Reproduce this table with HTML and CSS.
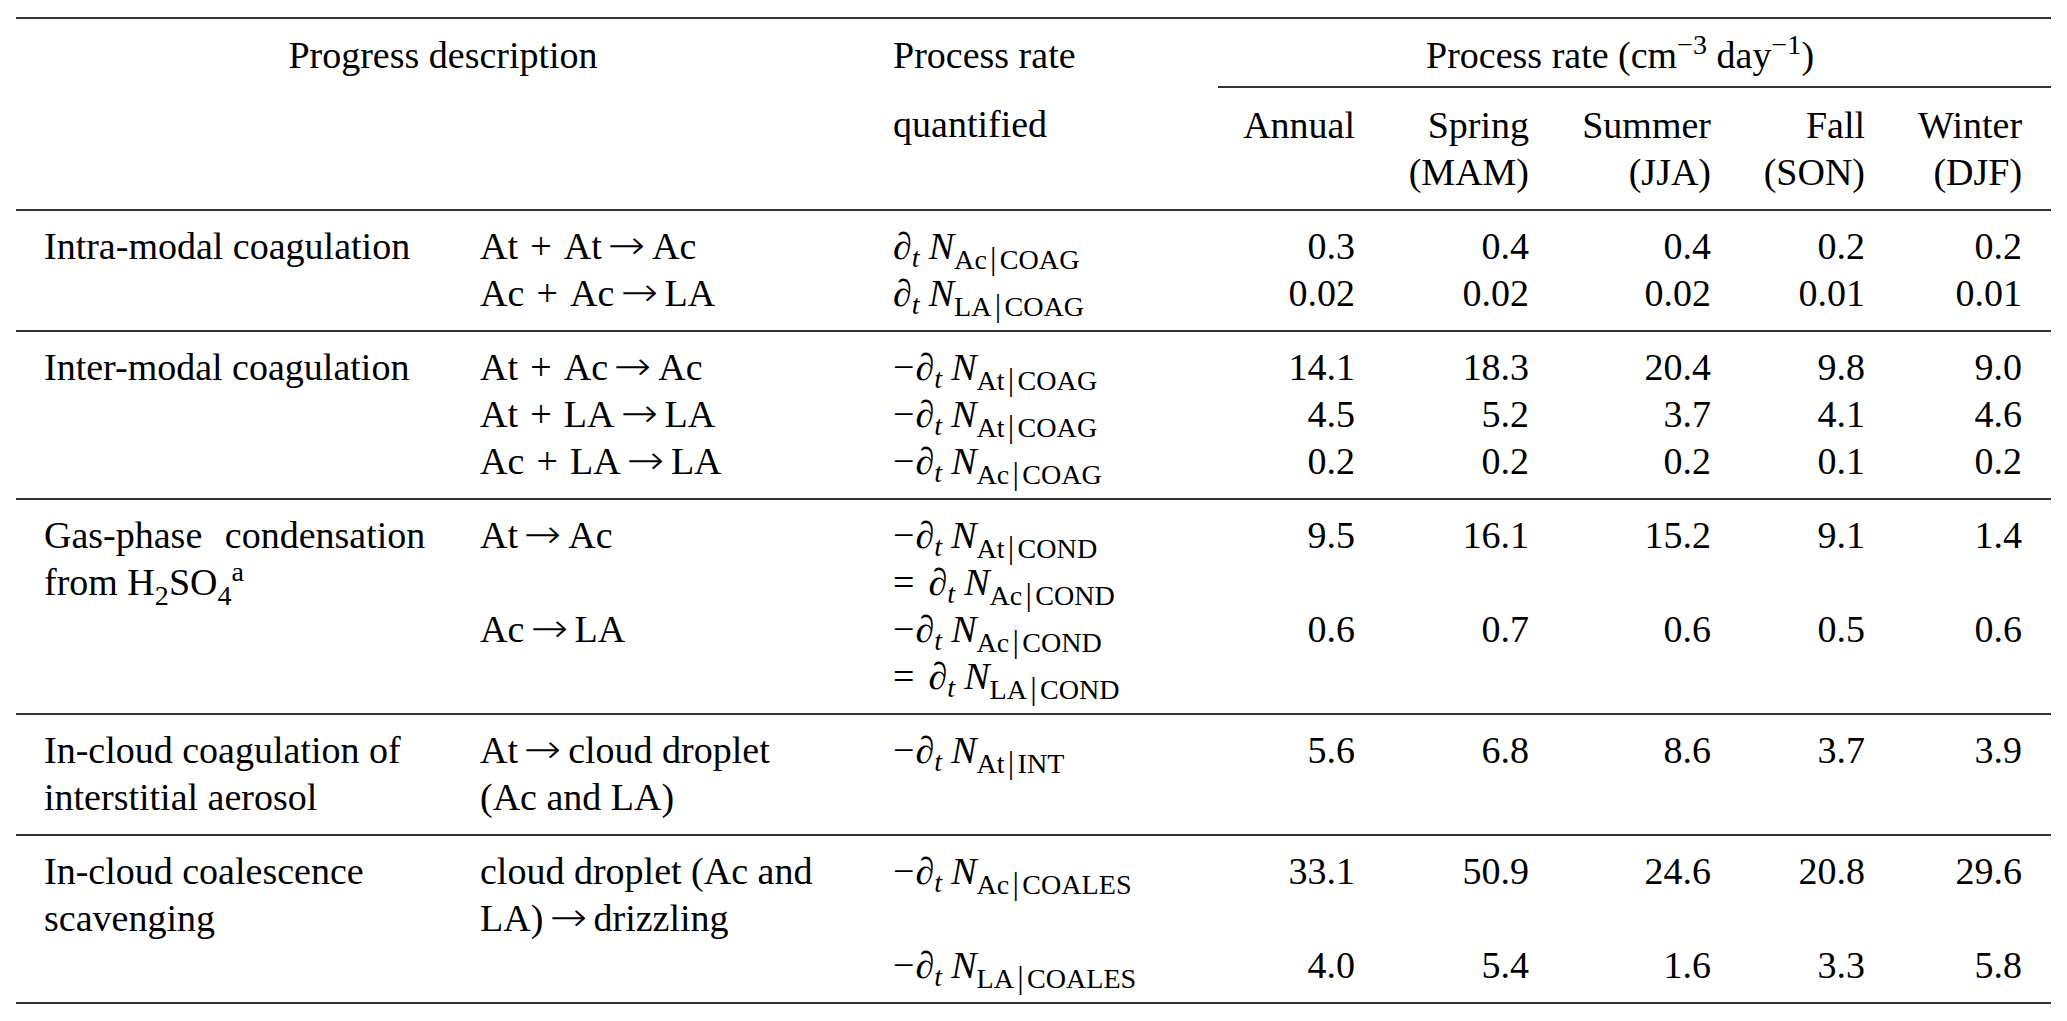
FILE: index.html
```html
<!DOCTYPE html>
<html lang="en">
<head>
<meta charset="utf-8">
<title>Process rates</title>
<link rel="stylesheet" href="styles.css">
</head>
<body>
<table class="rates">
  <colgroup>
    <col class="c-desc"><col class="c-react"><col class="c-qty">
    <col class="c-ann"><col class="c-spr"><col class="c-sum"><col class="c-fall"><col class="c-win">
  </colgroup>
  <thead>
    <tr class="h1">
      <th colspan="2" class="h-desc">Progress description</th>
      <th class="h-qty">Process rate</th>
      <th colspan="5" class="h-unit">Process rate (cm<sup>−3</sup> day<sup>−1</sup>)</th>
    </tr>
    <tr class="h2">
      <th colspan="2"></th>
      <th class="h-qty">quantified</th>
      <th class="num">Annual</th>
      <th class="num">Spring<br>(MAM)</th>
      <th class="num">Summer<br>(JJA)</th>
      <th class="num">Fall<br>(SON)</th>
      <th class="num">Winter<br>(DJF)</th>
    </tr>
  </thead>
  <tbody>
    <tr>
      <td class="desc">Intra-modal coagulation</td>
      <td>At<span class="bin">+</span>At<span class="rel">→</span>Ac</td>
      <td><span class="ex"><span class="pd">∂</span><sub class="it">t</sub><span class="nn">N</span><sub>Ac<span class="vb">|</span>COAG</sub></span></td>
      <td class="num">0.3</td><td class="num">0.4</td><td class="num">0.4</td><td class="num">0.2</td><td class="num">0.2</td>
    </tr>
    <tr>
      <td class="desc"></td>
      <td>Ac<span class="bin">+</span>Ac<span class="rel">→</span>LA</td>
      <td><span class="ex"><span class="pd">∂</span><sub class="it">t</sub><span class="nn">N</span><sub>LA<span class="vb">|</span>COAG</sub></span></td>
      <td class="num">0.02</td><td class="num">0.02</td><td class="num">0.02</td><td class="num">0.01</td><td class="num">0.01</td>
    </tr>
  </tbody>
  <tbody>
    <tr>
      <td class="desc">Inter-modal coagulation</td>
      <td>At<span class="bin">+</span>Ac<span class="rel">→</span>Ac</td>
      <td><span class="ex"><span class="op">−</span><span class="pd">∂</span><sub class="it">t</sub><span class="nn">N</span><sub>At<span class="vb">|</span>COAG</sub></span></td>
      <td class="num">14.1</td><td class="num">18.3</td><td class="num">20.4</td><td class="num">9.8</td><td class="num">9.0</td>
    </tr>
    <tr>
      <td class="desc"></td>
      <td>At<span class="bin">+</span>LA<span class="rel">→</span>LA</td>
      <td><span class="ex"><span class="op">−</span><span class="pd">∂</span><sub class="it">t</sub><span class="nn">N</span><sub>At<span class="vb">|</span>COAG</sub></span></td>
      <td class="num">4.5</td><td class="num">5.2</td><td class="num">3.7</td><td class="num">4.1</td><td class="num">4.6</td>
    </tr>
    <tr>
      <td class="desc"></td>
      <td>Ac<span class="bin">+</span>LA<span class="rel">→</span>LA</td>
      <td><span class="ex"><span class="op">−</span><span class="pd">∂</span><sub class="it">t</sub><span class="nn">N</span><sub>Ac<span class="vb">|</span>COAG</sub></span></td>
      <td class="num">0.2</td><td class="num">0.2</td><td class="num">0.2</td><td class="num">0.1</td><td class="num">0.2</td>
    </tr>
  </tbody>
  <tbody>
    <tr>
      <td class="desc"><span class="wide">Gas-phase condensation</span><br>from H<sub>2</sub>SO<sub>4</sub><sup>a</sup></td>
      <td>At<span class="rel">→</span>Ac</td>
      <td><span class="ex"><span class="op">−</span><span class="pd">∂</span><sub class="it">t</sub><span class="nn">N</span><sub>At<span class="vb">|</span>COND</sub></span><br><span class="ex"><span class="eq">=</span><span class="pd">∂</span><sub class="it">t</sub><span class="nn">N</span><sub>Ac<span class="vb">|</span>COND</sub></span></td>
      <td class="num">9.5</td><td class="num">16.1</td><td class="num">15.2</td><td class="num">9.1</td><td class="num">1.4</td>
    </tr>
    <tr>
      <td class="desc"></td>
      <td>Ac<span class="rel">→</span>LA</td>
      <td><span class="ex"><span class="op">−</span><span class="pd">∂</span><sub class="it">t</sub><span class="nn">N</span><sub>Ac<span class="vb">|</span>COND</sub></span><br><span class="ex"><span class="eq">=</span><span class="pd">∂</span><sub class="it">t</sub><span class="nn">N</span><sub>LA<span class="vb">|</span>COND</sub></span></td>
      <td class="num">0.6</td><td class="num">0.7</td><td class="num">0.6</td><td class="num">0.5</td><td class="num">0.6</td>
    </tr>
  </tbody>
  <tbody>
    <tr>
      <td class="desc">In-cloud coagulation of<br>interstitial aerosol</td>
      <td>At<span class="rel">→</span>cloud droplet<br>(Ac and LA)</td>
      <td><span class="ex"><span class="op">−</span><span class="pd">∂</span><sub class="it">t</sub><span class="nn">N</span><sub>At<span class="vb">|</span>INT</sub></span></td>
      <td class="num">5.6</td><td class="num">6.8</td><td class="num">8.6</td><td class="num">3.7</td><td class="num">3.9</td>
    </tr>
  </tbody>
  <tbody class="last">
    <tr>
      <td class="desc">In-cloud coalescence<br>scavenging</td>
      <td>cloud droplet (Ac and<br>LA)<span class="rel">→</span>drizzling</td>
      <td><span class="ex"><span class="op">−</span><span class="pd">∂</span><sub class="it">t</sub><span class="nn">N</span><sub>Ac<span class="vb">|</span>COALES</sub></span></td>
      <td class="num">33.1</td><td class="num">50.9</td><td class="num">24.6</td><td class="num">20.8</td><td class="num">29.6</td>
    </tr>
    <tr>
      <td class="desc"></td>
      <td></td>
      <td><span class="ex"><span class="op">−</span><span class="pd">∂</span><sub class="it">t</sub><span class="nn">N</span><sub>LA<span class="vb">|</span>COALES</sub></span></td>
      <td class="num">4.0</td><td class="num">5.4</td><td class="num">1.6</td><td class="num">3.3</td><td class="num">5.8</td>
    </tr>
  </tbody>
</table>
</body>
</html>
```

FILE: styles.css
```css
html, body {
  margin: 0;
  padding: 0;
  background: #ffffff;
}

body {
  color: #000000;
  font-family: "Liberation Serif", "Times New Roman", serif;
  font-size: 38px;
}

.rates {
  margin: 17px 0 0 16px;
  width: 2035px;
  border-collapse: collapse;
  table-layout: fixed;
  line-height: 47px;
}

.c-desc { width: 464px; }
.c-react { width: 413px; }
.c-qty { width: 325px; }
.c-ann { width: 137px; }
.c-spr { width: 174px; }
.c-sum { width: 182px; }
.c-fall { width: 154px; }
.c-win { width: 186px; }

.rates thead {
  border-top: 2px solid #333333;
  border-bottom: 2px solid #333333;
}

.rates tbody {
  border-top: 2px solid #333333;
}

.rates tbody.last {
  border-bottom: 2px solid #333333;
}

.rates th,
.rates td {
  padding: 0;
  vertical-align: top;
  text-align: left;
  font-weight: normal;
  white-space: nowrap;
}

.rates .num {
  text-align: right;
}

.rates th:last-child,
.rates td:last-child {
  padding-right: 29px;
}

.h1 th {
  padding-top: 13px;
  padding-bottom: 7px;
}

.h2 th {
  padding-top: 14px;
  padding-bottom: 13px;
}

.rates .h-desc {
  text-align: center;
  padding-left: 28px;
  padding-right: 51px;
}

.rates .h-unit {
  text-align: center;
  padding-right: 5px;
  border-bottom: 2px solid #333333;
}

.rates td.desc {
  padding-left: 28px;
}

.rates tbody tr:first-child td {
  padding-top: 12px;
}

.rates tbody tr:last-child td {
  padding-bottom: 13px;
}

.wide {
  word-spacing: 13px;
}

.bin {
  margin: 0 0.32em;
}

.rel {
  display: inline-block;
  font-family: "DejaVu Sans", sans-serif;
  font-weight: 200;
  font-size: 1.05em;
  line-height: 0;
  margin: 0 0.21em;
  transform: scaleX(1.12);
}

sub,
sup {
  font-size: 0.74em;
  line-height: 0;
}

sub {
  vertical-align: -0.36em;
}

sup {
  vertical-align: 0.5em;
}

.ex .op {
  margin-right: 1px;
}

.ex .eq {
  margin-right: 14px;
}

.ex .pd {
  font-style: italic;
}

.ex sub.it {
  font-style: italic;
  vertical-align: -0.3em;
}

.ex .nn {
  font-style: italic;
  margin-left: 0.24em;
}

.ex .vb {
  font-size: 1.15em;
  margin: 0 0.1em 0 0.1em;
}
```
